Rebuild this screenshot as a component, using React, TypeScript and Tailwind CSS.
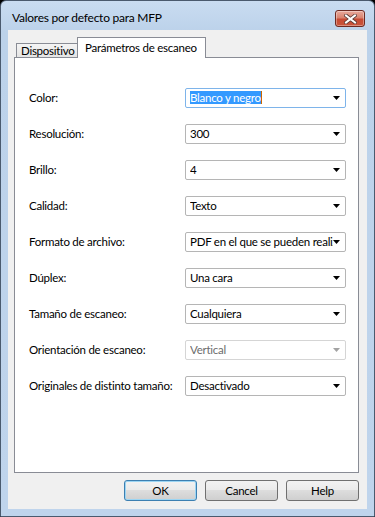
import type { ReactNode } from "react";

// Windows 7 style "MFP defaults" dialog, scan-parameters tab.

const FONT = "font-['Lato','Liberation_Sans',Arial,sans-serif]";

interface Row {
  label: string;
  value: string;
  focused?: boolean;
  disabled?: boolean;
}

const ROWS: Row[] = [
  { label: "Color:", value: "Blanco y negro", focused: true },
  { label: "Resolución:", value: "300" },
  { label: "Brillo:", value: "4" },
  { label: "Calidad:", value: "Texto" },
  { label: "Formato de archivo:", value: "PDF en el que se pueden realizar búsquedas" },
  { label: "Dúplex:", value: "Una cara" },
  { label: "Tamaño de escaneo:", value: "Cualquiera" },
  { label: "Orientación de escaneo:", value: "Vertical", disabled: true },
  { label: "Originales de distinto tamaño:", value: "Desactivado" },
];

function Arrow({ disabled }: { disabled?: boolean }) {
  return (
    <svg width="7" height="4" viewBox="0 0 7 4" className="shrink-0">
      <path d="M0 0H7L3.5 4Z" fill={disabled ? "#a3a3a3" : "#000"} />
    </svg>
  );
}

function Select({ row }: { row: Row }) {
  const border = row.focused
    ? "border-[#7eb4ea]"
    : row.disabled
      ? "border-[#d5d5d5]"
      : "border-[#b5b5b5]";
  return (
    <div
      className={`flex h-[20px] w-[161px] items-center rounded-[2px] border bg-white pl-[4px] pr-[5px] ${border}`}
    >
      <div className="min-w-0 flex-1 overflow-hidden whitespace-nowrap pr-[5px]">
        {row.focused ? (
          <span className="inline-flex items-center">
            <span className="bg-[#3399ff] leading-[13px] text-white">{row.value}</span>
            <span className="h-[13px] w-px bg-[#cc6600]" />
          </span>
        ) : (
          <span className={row.disabled ? "text-[#6d6d6d]" : "text-black"}>{row.value}</span>
        )}
      </div>
      <Arrow disabled={row.disabled} />
    </div>
  );
}

function Button({ children, isDefault }: { children: ReactNode; isDefault?: boolean }) {
  return (
    <button
      type="button"
      className={`h-[21px] w-[73px] rounded-[3px] border bg-[linear-gradient(#f2f2f2_0%,#ebebeb_45%,#dddddd_50%,#cfcfcf_100%)] leading-none text-black ${
        isDefault ? "border-[#3c7fb1] shadow-[inset_0_0_0_1px_#9cd5f3]" : "border-[#707070]"
      }`}
    >
      {children}
    </button>
  );
}

function CloseButton() {
  return (
    <div className="flex h-[17px] w-[30px] items-center justify-center rounded-[3px] border border-[#6d2a22] bg-[linear-gradient(#e9a99c_0%,#d9836f_45%,#c74a34_55%,#c9553c_100%)] shadow-[inset_0_0_0_1px_rgba(255,255,255,0.35)]">
      <svg width="13" height="10" viewBox="0 0 13 10">
        <path d="M2 1.5L11 8.5M11 1.5L2 8.5" stroke="#5a3a36" strokeWidth="3.6" strokeLinecap="square" />
        <path d="M2 1.5L11 8.5M11 1.5L2 8.5" stroke="#fff" strokeWidth="2" strokeLinecap="square" />
      </svg>
    </div>
  );
}

export default function App() {
  return (
    <div className={`h-[517px] w-[375px] bg-black text-[11.5px] tracking-[-0.25px] text-black ${FONT}`}>
      <div className="flex h-full w-full flex-col rounded-t-[6px] border border-[#4a5a6e] bg-[linear-gradient(#c9dcf1_0px,#bcd2ea_30px,#bfd4ec_100%)]">
        {/* Title bar */}
        <div className="flex h-[29px] shrink-0 items-start justify-between pl-[11px] pr-[9px]">
          <span className="pt-[10px] text-[12px] leading-[14px]">Valores por defecto para MFP</span>
          <div className="pt-[9px]">
            <CloseButton />
          </div>
        </div>

        {/* Client area */}
        <div className="mx-[7px] mb-[7px] flex flex-1 flex-col bg-[#f0f0f0] pl-[6px] pr-[8px]">
          {/* Tabs */}
          <div className="flex h-[27px] shrink-0 items-end whitespace-nowrap pl-[2px]">
            <div className="flex h-[14px] w-[61px] items-start border-l border-t border-[#898c95] bg-[linear-gradient(#f4f4f4,#e4e4e4)] pl-[4px]">
              <span className="leading-[13px]">Dispositivo</span>
            </div>
            <div className="relative z-10 -mb-px flex h-[21px] w-[129px] items-start border-x border-t border-[#898c95] bg-white pl-[7px] pt-[3px]">
              <span className="leading-[14px]">Parámetros de escaneo</span>
            </div>
          </div>

          {/* Tab panel */}
          <div className="flex flex-1 flex-col gap-[16px] border border-[#898c95] bg-white pl-[14px] pt-[30px]">
            {ROWS.map((row) => (
              <div key={row.label} className="flex h-[20px] items-center">
                <span className="w-[156px] shrink-0 whitespace-nowrap">{row.label}</span>
                <Select row={row} />
              </div>
            ))}
          </div>

          {/* Buttons */}
          <div className="flex shrink-0 justify-end gap-[8px] pb-[8px] pt-[7px]">
            <Button isDefault>OK</Button>
            <Button>Cancel</Button>
            <Button>Help</Button>
          </div>
        </div>
      </div>
    </div>
  );
}
